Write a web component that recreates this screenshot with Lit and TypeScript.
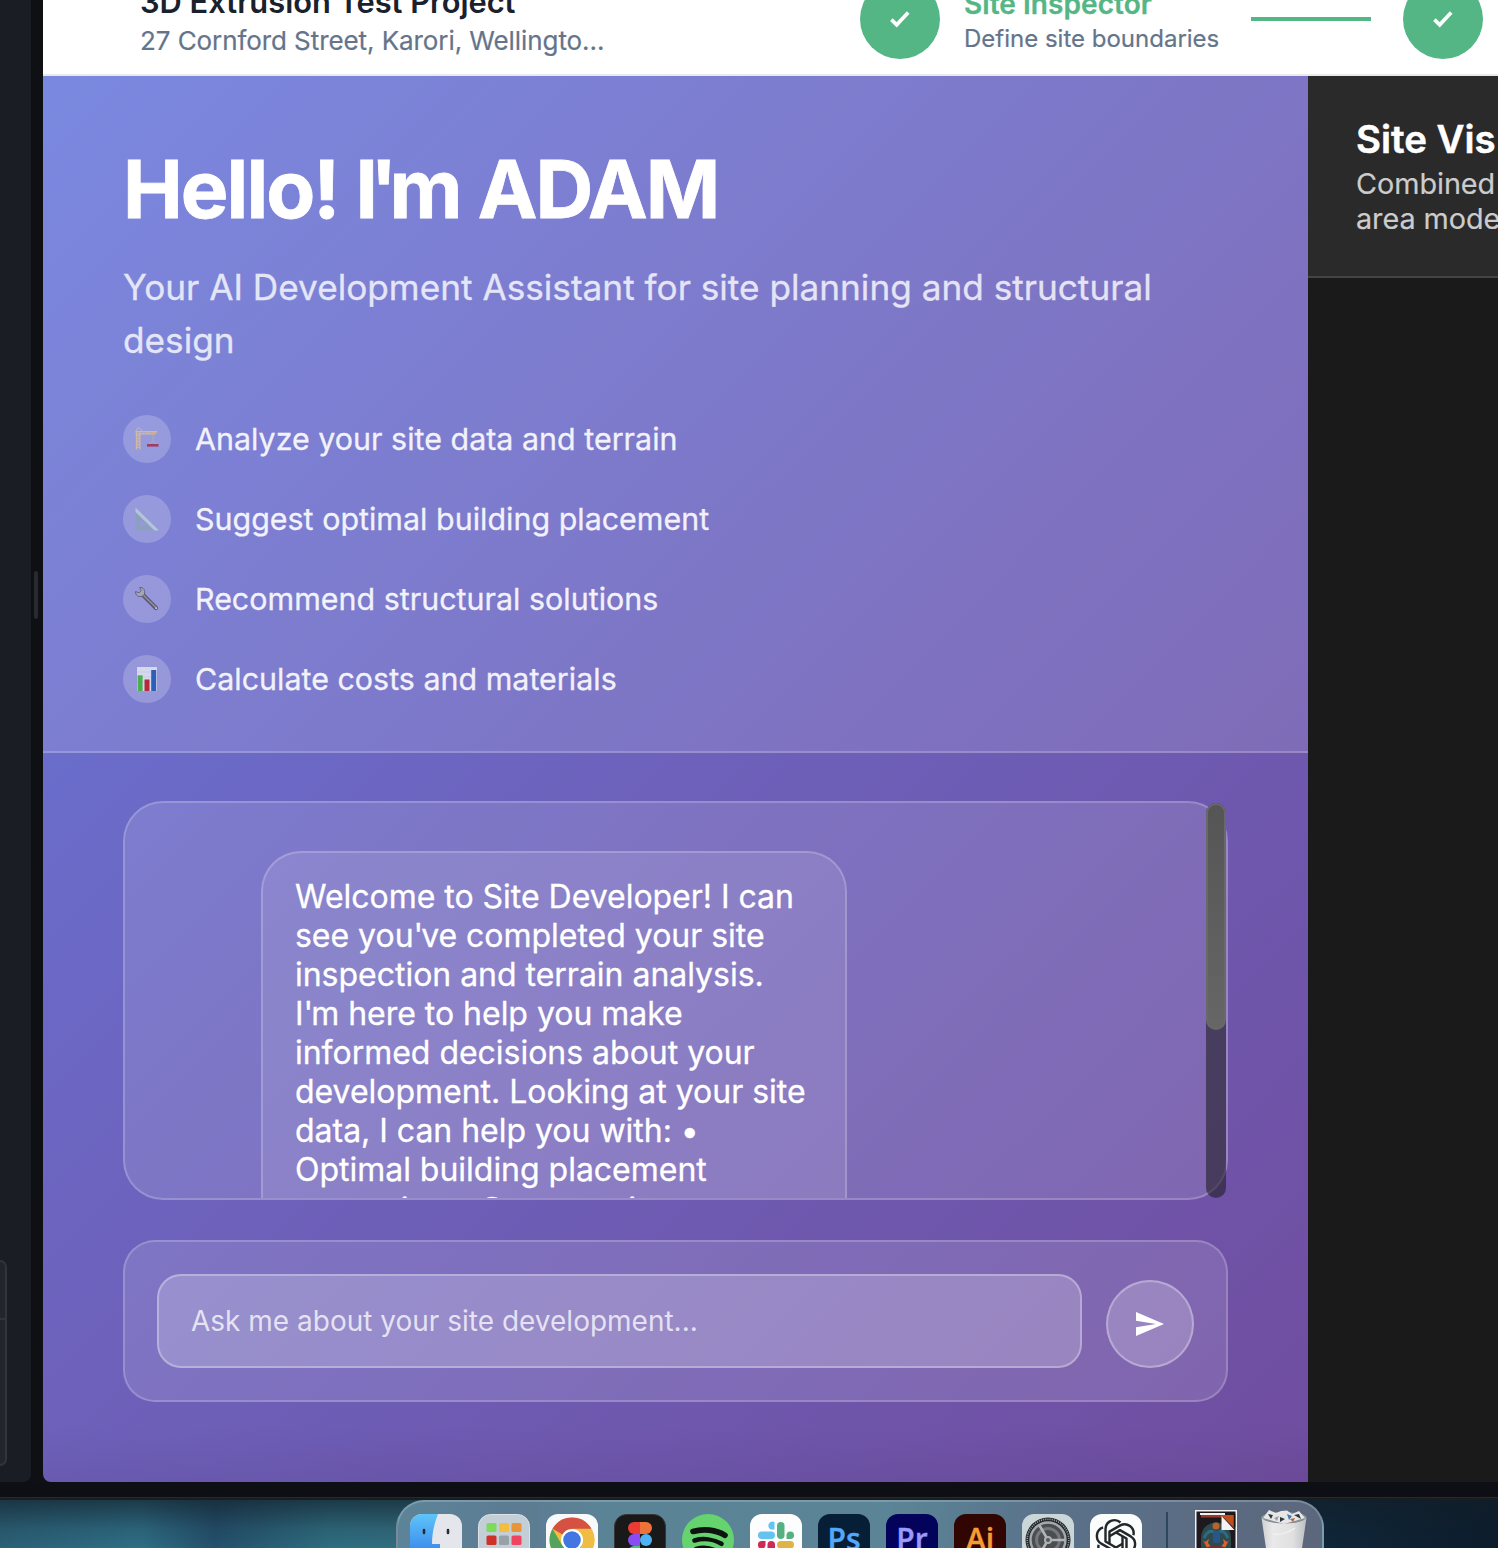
import { LitElement, html, css, svg } from "lit";
import { customElement } from "lit/decorators.js";

const crane = svg`<svg viewBox="0 0 24 24" width="24" height="24">
  <path d="M1.500 4V22.500M4.900 4V22.500M0.500 4.600H22M0.500 6.800H17" fill="none" stroke="#d3b9a0" stroke-width="1.300"/><path d="M1.500 8.500H5M1.500 11.500H5M1.500 14.500H5M1.500 17.500H5M1.500 20.500H5M1.500 8.500L5 11.500L1.500 14.500L5 17.500L1.500 20.500M3.200 0.500L0.800 4.500M3.200 0.500L8 4.500M8 4.600L9.500 6.800L11 4.600L12.500 6.800L14 4.600L15.500 6.800" fill="none" stroke="#cfb49c" stroke-width="1"/>
  <path d="M16 5H21.500V6.600L18 8.500Z" fill="#cfb07a"/><path d="M18 8.500V14L13.500 17.500M18 14L22.500 17.500" fill="none" stroke="#b7a8b0" stroke-width=".9"/>
  <rect x="12" y="17" width="11.500" height="2.600" fill="#a23d62"/></svg>`;
const ruler = svg`<svg viewBox="0 0 24 24" width="24" height="24">
  <path fill-rule="evenodd" d="M0.500 0.500L24 23.500H0.500ZM5 12.500V18.800H11.500Z" fill="#8d9fc0"/><path d="M0.500 0.500L24 23.500H19.500L0.500 5Z" fill="#b6c3dc"/></svg>`;
const wrench = svg`<svg viewBox="0 0 24 24" width="24" height="24">
  <path d="M7.500 7.500L21 21" stroke="#55546a" stroke-width="4.200" stroke-linecap="round"/><path d="M7.500 7.300L21 20.700" stroke="#8b8aa0" stroke-width="1.800" stroke-linecap="round"/>
  <path d="M4.600 0.400L6.200 3.600L4.200 5.800L0.600 4.600C0.200 8.600 4 10.600 7.600 9L9.400 7.400C10.600 3.600 8.400 0 4.600 0.400Z" fill="#a4a6b8" stroke="#55546a" stroke-width=".8"/><circle cx="21.200" cy="21.200" r="1" fill="#c9c8d8"/></svg>`;
const chart = svg`<svg viewBox="0 0 24 24" width="24" height="24">
  <rect x="2" y="0" width="20" height="24" fill="#d5d9ee"/><path d="M2 5H22M2 10H22M2 15H22" stroke="#c1c8e2" stroke-width=".6"/>
  <rect x="2.600" y="8.300" width="5" height="15.700" fill="#4cae50"/><rect x="9.500" y="12.500" width="5" height="11.500" fill="#b42c3c"/><rect x="16.200" y="3" width="5" height="21" fill="#2e5fb8"/></svg>`;
const check = svg`<svg viewBox="0 0 24 20" width="24" height="20"><path d="M3.400 10.600L8.700 15.800L20.200 3.400" fill="none" stroke="#fff" stroke-width="3.700"/></svg>`;
const send = svg`<svg viewBox="0 0 28 24" width="28" height="24"><path d="M0 0L28 12L0 24V15.200L20 12L0 8.800Z" fill="#fff"/></svg>`;

const finder = svg`<svg viewBox="0 0 52 52" width="52" height="52"><defs><linearGradient id="fa" x2="0" y2="1"><stop offset="0" stop-color="#5ec4f8"/><stop offset="1" stop-color="#2f74e8"/></linearGradient><clipPath id="fc"><rect width="52" height="52" rx="12"/></clipPath></defs>
  <g clip-path="url(#fc)"><rect width="52" height="52" fill="#e4e6ec"/><path d="M0 0H28C24 10 22 20 22 30H30V52H0Z" fill="url(#fa)"/><path d="M14 16V19M38 16V19" stroke="#252b35" stroke-width="2.600" stroke-linecap="round"/></g></svg>`;
const launchpad = svg`<svg viewBox="0 0 52 52" width="52" height="52"><rect x=".5" y=".5" width="51" height="51" rx="12" fill="#c3ced6" stroke="#dbe3e8"/>
  <rect x="8.500" y="9" width="10" height="9" rx="1.600" fill="#7cdc5a"/><rect x="21" y="9" width="10" height="9" rx="1.600" fill="#f3bd3e"/><rect x="33.500" y="9" width="10" height="9" rx="1.600" fill="#ea9438"/>
  <rect x="8.500" y="21.500" width="10" height="9.500" rx="1.600" fill="#cf3128"/><rect x="21" y="21.500" width="10" height="9.500" rx="1.600" fill="#96a1a9"/><rect x="33.500" y="21.500" width="10" height="9.500" rx="1.600" fill="#ee4460"/></svg>`;
const chrome = svg`<svg viewBox="0 0 52 52" width="52" height="52"><rect width="52" height="52" rx="12" fill="#f8f9fa"/><circle cx="26" cy="26" r="22.500" fill="#efbd42"/>
  <path d="M26 26L6.500 14.800A22.500 22.500 0 0 1 45.500 14.800H26Z" fill="#d55141"/><path d="M26 26L35.500 32L26 48.500A22.500 22.500 0 0 1 6.500 14.800L16.300 31.600Z" fill="#53a45a"/><path d="M26 15H45.500A22.500 22.500 0 0 1 26 48.500L35.700 31.500Z" fill="#efbd42"/>
  <circle cx="26" cy="26" r="11" fill="#fff"/><circle cx="26" cy="26" r="8.800" fill="#4277e2"/></svg>`;
const figma = svg`<svg viewBox="0 0 52 52" width="52" height="52"><rect x=".5" y=".5" width="51" height="51" rx="12" fill="#191919" stroke="#353535"/>
  <path d="M26 8H20A6 6 0 0 0 20 20H26Z" fill="#ea3c35"/><path d="M26 8H32A6 6 0 0 1 32 20H26Z" fill="#ed7338"/><path d="M26 20H20A6 6 0 0 0 20 32H26Z" fill="#8a4bf0"/><circle cx="32" cy="26" r="6" fill="#4eb3f4"/><path d="M20 32H26V38A6 6 0 1 1 20 32Z" fill="#49c178"/></svg>`;
const spotify = svg`<svg viewBox="0 0 52 52" width="52" height="52"><circle cx="26" cy="26" r="26" fill="#65d36e"/><g fill="none" stroke="#0d130e" stroke-linecap="round"><path d="M11 17.500C21 14.500 34 15.500 43 21.300" stroke-width="5.600"/><path d="M12.500 26.500C21 24 31.500 25 39.500 29.800" stroke-width="4.600"/><path d="M14 34.500C21 32.500 29 33.300 36 37.500" stroke-width="3.800"/></g></svg>`;
const slack = svg`<svg viewBox="0 0 52 52" width="52" height="52"><rect width="52" height="52" rx="12" fill="#fdfdfd"/>
  <path d="M24.500 8A3.800 3.800 0 1 0 20.700 15.500H24.500Z" fill="#64c3ef"/><rect x="8" y="17.500" width="17" height="7.500" rx="3.750" fill="#64c3ef"/><rect x="27" y="8" width="7.500" height="17" rx="3.750" fill="#55b082"/><path d="M36.500 25V21.200A3.800 3.800 0 1 1 40.300 25Z" fill="#55b082"/>
  <path d="M15.500 27V30.800A3.800 3.800 0 1 1 11.700 27Z" fill="#cd2a56"/><rect x="17.500" y="27" width="7.500" height="17" rx="3.750" fill="#cd2a56"/><rect x="27" y="27" width="17" height="7.500" rx="3.750" fill="#e0b346"/><path d="M27 36.500H30.800A3.800 3.800 0 1 1 27 40.300Z" fill="#e0b346"/></svg>`;
const settings = svg`<svg viewBox="0 0 52 52" width="52" height="52"><rect width="52" height="52" rx="12" fill="#cbd6d9"/><circle cx="26" cy="26" r="22.500" fill="#24282b"/><circle cx="26" cy="26" r="20.800" fill="none" stroke="#959b9e" stroke-width="1.600" stroke-dasharray="1.100 1.100"/>
  <circle cx="26" cy="26" r="17.500" fill="#4a4e50" stroke="#a4a9ab" stroke-width="2.400"/><circle cx="26" cy="26" r="11.500" fill="none" stroke="#74787a" stroke-width="3"/><path d="M26 26L17.500 11.500M26 26H43M26 26L17.500 40.500" stroke="#b0b5b7" stroke-width="2.600"/><circle cx="26" cy="26" r="3" fill="#55585a" stroke="#adb1b3" stroke-width="2"/></svg>`;
const knotPetal = "M4.500 -17.500A9 9 0 0 0 -10.500 -11V1.500L0 7.500";
const knot = svg`<svg viewBox="0 0 52 52" width="52" height="52"><rect width="52" height="52" rx="12" fill="#fbfcfc"/><g transform="translate(26 26)" fill="none" stroke="#22272a" stroke-width="2.400" stroke-linejoin="round">
  ${[0, 60, 120, 180, 240, 300].map((a) => svg`<path d=${knotPetal} transform=${`rotate(${a})`}/>`)}</g></svg>`;
const doc = svg`<svg viewBox="0 0 42 52" width="42" height="52"><rect x=".75" y=".75" width="40.500" height="60" fill="#1d191e" stroke="#f1f1f1" stroke-width="1.500"/><path d="M5 3H30V5H5Z" fill="#f1f1f1"/><path d="M6 5H28V7.500H6Z" fill="#9a3a22"/>
  <path d="M6 52V27Q7 14 21 12Q35 14 36 27V52Z" fill="#2e4a4d"/><circle cx="21" cy="16" r="3.500" fill="#b9622c"/><path d="M9 28Q13 19 19 22M33 28Q29 19 24 22" stroke="#2f6c83" stroke-width="3" fill="none"/><rect x="18" y="21" width="7" height="12" rx="2" fill="#28558a"/><path d="M8 30L12 38H17L13 33L14 29L10 32ZM34 30L30 38H25L29 33L28 29L32 32Z" fill="#d9602f"/><path d="M10 38Q21 33 32 38V52H10Z" fill="#6d3134"/><path d="M26 5H39V18Z" fill="#c04f1c"/><path d="M26.500 6L39.500 20H26.500Z" fill="#f3f3f3"/><path d="M39.500 4V17" stroke="#111" stroke-width="1.500"/></svg>`;
const trash = svg`<svg viewBox="0 0 46 52" width="46" height="52"><defs><linearGradient id="tg"><stop offset="0" stop-color="#cfd0d1"/><stop offset=".25" stop-color="#e9e9ea"/><stop offset=".7" stop-color="#e0e0e1"/><stop offset="1" stop-color="#bcbec0"/></linearGradient></defs>
  <ellipse cx="23" cy="7.500" rx="22.500" ry="5.500" fill="#8b9093"/>
  <path d="M2 8L8 0L15 3L20 1L26 0.500L31 4L38 1L44 8L23 14Z" fill="#e6e6e6"/><path d="M7 4L12 5L10 9ZM33 5L38 4L40 9ZM19 7L24 9L19 12Z" fill="#30363b"/><path d="M26 4L31 6L28 10Z" fill="#3d7cb8"/><path d="M13 8L18 6L16 11Z" fill="#9aa0a4"/><path d="M29 9L34 8L32 12Z" fill="#b5653f"/>
  <path d="M0.500 7.500Q4 13 23 13.500Q42 13 45.500 7.500L39 52H7Z" fill="url(#tg)"/><path d="M12 24Q22 26 34 18" stroke="#f1f1f1" stroke-width="1.500" fill="none"/></svg>`;

@customElement("app-root")
export class AppRoot extends LitElement {
  static styles = css`
    * { box-sizing: border-box; }
    :host { display: block; width: 1498px; height: 1548px; overflow: hidden; font-family: Inter, "Liberation Sans", sans-serif; }
    svg { display: block; flex: none; }
    .screen { display: flex; flex-direction: column; height: 1548px; background: #0f1014; }
    .window { display: flex; height: 1482px; flex: none; }
    .sidebar { width: 31px; height: 1482px; background: #1a1d24; border-radius: 0 0 8px 0; display: flex; align-items: flex-end; padding-bottom: 16px; flex: none; }
    .side-card { width: 7px; height: 206px; background: #22252c; border: 2px solid #31343b; border-left: 0; border-radius: 0 8px 8px 0; }
    .side-card-head { height: 58px; border-bottom: 2px solid #31343b; }
    .gutter { width: 12px; display: flex; flex: none; padding: 571px 0 0 3px; }
    .grip { width: 4px; height: 48px; border-radius: 2px; background: #292930; }
    .app { width: 1455px; flex: none; display: flex; flex-direction: column; border-bottom-left-radius: 8px; overflow: hidden; }
    .top { height: 76px; flex: none; background: #fff; border-bottom: 2px solid #e8eaed; display: flex; align-items: flex-end; white-space: nowrap; overflow: hidden; }
    .project { width: 817px; padding: 0 0 15px 97px; flex: none; }
    .project-name { font-size: 30.8px; font-weight: 600; line-height: 34px; color: #1a202c; margin-bottom: 4px; }
    .project-address { font-size: 26px; letter-spacing: -0.08px; line-height: 36px; color: #64748b; -webkit-text-stroke: 0.2px #64748b; }
    .steps { display: flex; align-items: center; flex: none; padding-bottom: 15px; height: 110px; padding-top: 15px; }
    .dot { width: 80px; height: 80px; border-radius: 50%; background: #55b685; display: grid; place-items: center; flex: none; }
    .step-text { width: 255px; margin: 0 32px 0 24px; padding-top: 3px; }
    .step-name { font-size: 28px; font-weight: 600; line-height: 34px; color: #55b685; margin-bottom: 3px; letter-spacing: 0.06px; -webkit-text-stroke: 0.3px #55b685; }
    .step-info { font-size: 24px; line-height: 30px; color: #64748b; -webkit-text-stroke: 0.2px #64748b; }
    .link { width: 120px; height: 4px; background: #55b685; margin-right: 32px; }
    .body { display: flex; flex: 1; }
    .chat-panel { width: 1265px; flex: none; height: 1406px; background: linear-gradient(transparent 96%, rgba(60, 40, 90, 0.1)), linear-gradient(135deg, #6879dc 0%, #6d61bb 50%, #704d9f 100%); }
    .hero { height: 677px; background: rgba(255, 255, 255, 0.12); border-bottom: 2px solid rgba(255, 255, 255, 0.2); padding: 64px 80px 0; color: #fff; }
    .hello { margin: 0; font-size: 80px; line-height: 97px; font-weight: 700; letter-spacing: -1.9px; white-space: nowrap; -webkit-text-stroke: 0.8px #fff; }
    .hello-tight { letter-spacing: -7.8px; }
    .tagline { margin: 24px 0 48px; font-size: 35.2px; line-height: 53px; opacity: 0.8; -webkit-text-stroke: 0.3px #fff; }
    .features { display: flex; flex-direction: column; gap: 32px; }
    .feature { display: flex; align-items: center; gap: 24px; height: 48px; font-size: 30.4px; white-space: nowrap; }
    .feature-text { opacity: 0.9; letter-spacing: 0.02px; -webkit-text-stroke: 0.3px #fff; }
    .bubble-icon { width: 48px; height: 48px; border-radius: 50%; background: rgba(255, 255, 255, 0.2); display: grid; place-items: center; }
    .talk { padding: 48px 80px 0; display: flex; flex-direction: column; gap: 40px; }
    .log-wrap { position: relative; height: 399px; }
    .log { height: 399px; border: 2px solid rgba(255, 255, 255, 0.2); border-radius: 40px; background: rgba(255, 255, 255, 0.12); overflow: hidden; padding: 48px 0 0 136px; }
    .message { width: 586px; height: 500px; border: 2px solid rgba(255, 255, 255, 0.2); border-radius: 40px; background: rgba(255, 255, 255, 0.1); padding: 24px 0 0 32px; color: #fff; font-size: 32px; line-height: 39px; letter-spacing: -0.02px; white-space: nowrap; -webkit-text-stroke: 0.3px #fff; }
    .message-line:last-child { margin-top: 1px; }
    .apostrophe { letter-spacing: -2px; }
    .track { position: absolute; right: 2px; top: 2px; width: 20px; height: 395px; border-radius: 10px; background: rgba(26, 26, 26, 0.55); }
    .thumb { height: 227px; border-radius: 10px; border: 2px solid #696969; background: linear-gradient(#555, #666); }
    .composer { height: 162px; border: 2px solid rgba(255, 255, 255, 0.2); border-radius: 32px; background: rgba(255, 255, 255, 0.12); padding: 32px; display: flex; align-items: flex-end; gap: 24px; }
    .field { flex: 1; height: 94px; border: 2px solid rgba(255, 255, 255, 0.3); border-radius: 24px; background: rgba(255, 255, 255, 0.2); padding: 0 32px; display: flex; align-items: center; font-size: 28px; color: rgba(255, 255, 255, 0.75); white-space: nowrap; }
    .send { width: 88px; height: 88px; border-radius: 50%; border: 2px solid rgba(255, 255, 255, 0.3); background: rgba(255, 255, 255, 0.2); padding: 0; display: grid; place-items: center; }
    .viewer { width: 190px; flex: none; background: #1a1a1a; overflow: hidden; white-space: nowrap; }
    .viewer-head { height: 202px; background: #2a2a2a; border-bottom: 2px solid #444; padding: 38px 0 0 48px; }
    .viewer-title { font-size: 38.4px; font-weight: 600; line-height: 50px; color: #fff; margin-bottom: 2px; -webkit-text-stroke: 0.5px #fff; }
    .viewer-info { font-size: 28.8px; line-height: 35px; color: #ccc; letter-spacing: -0.05px; -webkit-text-stroke: 0.2px #ccc; }
    .bezel { height: 18px; flex: none; background: linear-gradient(#0e0f14 0 15px, #29292c 15px 16px, #1b1c1e 16px); }
    .desktop { height: 48px; flex: none; display: flex; padding-left: 396px; background: linear-gradient(rgba(18, 30, 40, 0.65), rgba(18, 30, 40, 0.15) 60%, transparent), linear-gradient(90deg, #2b6076 0, #2f6e86 140px, #24506c 215px, #2f6d80 330px, #326d80 400px, #10283b 1300px, #0c1c2c 1498px); }
    .dock { width: 928px; height: 92px; border: 2px solid rgba(190, 215, 225, 0.3); border-bottom: 0; border-radius: 28px 28px 0 0; background: linear-gradient(90deg, #5c8499, #5d7b92 13%, #5b8396 22%, #5b8496 53%, #5a718a 72%, #5c677c 100%); display: flex; padding: 12px 0 0 12px; }
    .apps { display: flex; gap: 16px; }
    .adobe { width: 52px; height: 52px; border-radius: 12px; text-align: center; font: 600 30px/50px "Open Sans", sans-serif; -webkit-text-stroke: 0.4px currentColor; }
    .ps { background: #061e36; color: #52a8fb; }
    .pr { background: #03035c; color: #9b9afa; }
    .ai { background: #310502; color: #f79c35; }
    .divider { width: 2px; height: 60px; background: #2d465c; margin: -2px 27px 0 24px; }
    .extra { display: flex; gap: 24px; margin-top: -4px; }
  `;

  private features = [
    { icon: crane, text: "Analyze your site data and terrain" },
    { icon: ruler, text: "Suggest optimal building placement" },
    { icon: wrench, text: "Recommend structural solutions" },
    { icon: chart, text: "Calculate costs and materials" },
  ];

  private message = [
    "Welcome to Site Developer! I can",
    "see you've completed your site",
    "inspection and terrain analysis.",
    "I'm here to help you make",
    "informed decisions about your",
    "development. Looking at your site",
    "data, I can help you with: •",
    "Optimal building placement",
    "strategies • Construction",
  ];

  // Tightens the spacing after an apostrophe.
  private line(text: string) {
    const [head, tail] = text.split("'");
    return tail === undefined
      ? html`<div class="message-line">${text}</div>`
      : html`<div class="message-line">${head}<span class="apostrophe">'</span>${tail}</div>`;
  }

  render() {
    return html`<div class="screen">
      <div class="window">
        <div class="sidebar"><div class="side-card"><div class="side-card-head"></div></div></div>
        <div class="gutter"><div class="grip"></div></div>
        <div class="app">
          <header class="top">
            <div class="project"><div class="project-name">3D Extrusion Test Project</div><div class="project-address">27 Cornford Street, Karori, Wellingto...</div></div>
            <div class="steps">
              <div class="dot">${check}</div>
              <div class="step-text"><div class="step-name">Site Inspector</div><div class="step-info">Define site boundaries</div></div>
              <div class="link"></div>
              <div class="dot">${check}</div>
            </div>
          </header>
          <div class="body">
            <main class="chat-panel">
              <section class="hero">
                <h1 class="hello">Hello! <span class="hello-tight">I'</span>m ADAM</h1>
                <p class="tagline">Your AI Development Assistant for site planning and structural design</p>
                <div class="features">${this.features.map((f) => html`<div class="feature"><span class="bubble-icon">${f.icon}</span><span class="feature-text">${f.text}</span></div>`)}</div>
              </section>
              <section class="talk">
                <div class="log-wrap">
                  <div class="log"><div class="message">${this.message.map((l) => this.line(l))}</div></div>
                  <div class="track"><div class="thumb"></div></div>
                </div>
                <div class="composer"><div class="field">Ask me about your site development...</div><button class="send" aria-label="Send">${send}</button></div>
              </section>
            </main>
            <aside class="viewer"><div class="viewer-head"><div class="viewer-title">Site Vis</div><div class="viewer-info"><div>Combined</div><div>area mode</div></div></div></aside>
          </div>
        </div>
      </div>
      <div class="bezel"></div>
      <div class="desktop">
        <div class="dock">
          <div class="apps">${finder}${launchpad}${chrome}${figma}${spotify}${slack}<div class="adobe ps">Ps</div><div class="adobe pr">Pr</div><div class="adobe ai">Ai</div>${settings}${knot}</div>
          <div class="divider"></div>
          <div class="extra">${doc}${trash}</div>
        </div>
      </div>
    </div>`;
  }
}
